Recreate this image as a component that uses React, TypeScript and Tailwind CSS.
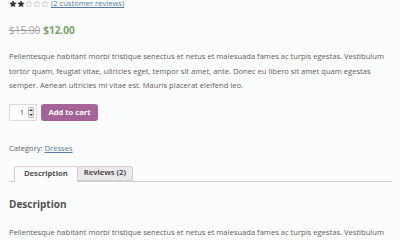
import React from 'react';

function Star({ filled }: { filled: boolean }) {
  return (
    <svg viewBox="0 0 24 24" className="w-[8px] h-[8px]">
      <path
        d="M12 2.5l2.9 6.1 6.6.8-4.9 4.6 1.3 6.6L12 17.3l-5.9 3.3 1.3-6.6-4.9-4.6 6.6-.8z"
        fill={filled ? '#333' : 'none'}
        stroke={filled ? '#333' : '#b5b5b5'}
        strokeWidth="1.6"
        strokeLinejoin="round"
      />
    </svg>
  );
}

export default function App() {
  const lorem =
    'Pellentesque habitant morbi tristique senectus et netus et malesuada fames ac turpis egestas. Vestibulum tortor quam, feugiat vitae, ultricies eget, tempor sit amet, ante. Donec eu libero sit amet quam egestas semper. Aenean ultricies mi vitae est. Mauris placerat eleifend leo.';

  return (
    <div className="w-[400px] h-[240px] overflow-hidden bg-[#fbfcfc] text-[#5e5e5e] font-['Open_Sans',sans-serif]">
      <div className="px-[9px]">
        {/* Rating */}
        <div className="-mt-[2px] h-[12px] flex items-center gap-[2px] text-[7.6px]">
          <div className="flex">
            {[0, 1, 2, 3, 4].map((i) => (
              <Star key={i} filled={i < 2} />
            ))}
          </div>
          <a href="#" className="text-[#557da1] underline">
            (2 customer reviews)
          </a>
        </div>

        {/* Price */}
        <div className="mt-[12px] h-[16px] flex items-center gap-[3px] text-[10px] leading-[16px]">
          <del className="text-[#a3a3a3]">$15.00</del>
          <span className="font-bold text-[#77a464]">$12.00</span>
        </div>

        {/* Short description */}
        <p className="mt-[11px] text-[7.6px] leading-[14.5px]">{lorem}</p>

        {/* Add to cart */}
        <form className="mt-[11.5px] flex gap-[4px] h-[17px]">
          <div className="w-[28px] h-[17px] border border-[#dcdcdc] bg-white flex items-center justify-end pr-[2px] gap-[4px]">
            <span className="text-[7.6px] text-[#444]">1</span>
            <div className="w-[6px] h-[11px] border border-[#bbb] bg-[#eee] flex flex-col items-center justify-around rounded-[1px]">
              <span className="w-0 h-0 border-l-[2px] border-r-[2px] border-b-[2px] border-l-transparent border-r-transparent border-b-[#444]" />
              <span className="w-0 h-0 border-l-[2px] border-r-[2px] border-t-[2px] border-l-transparent border-r-transparent border-t-[#444]" />
            </div>
          </div>
          <button
            type="button"
            className="w-[57px] h-[17px] rounded-[3px] bg-[#a46497] text-white font-bold text-[7.6px] flex items-center justify-center"
          >
            Add to cart
          </button>
        </form>

        {/* Meta */}
        <div className="mt-[20px] text-[7.6px] leading-[14.5px]">
          Category:{' '}
          <a href="#" className="text-[#557da1] underline">
            Dresses
          </a>
        </div>

        {/* Tabs */}
        <div className="mt-[10px] flex pl-[5px] border-b border-[#d3ced2] h-[16px]">
          <div className="h-[16px] -mb-px px-[9px] flex items-center bg-[#fbfcfc] border border-b-0 border-[#d3ced2] rounded-t-[3px] text-[7.6px] font-bold text-[#515151]">
            Description
          </div>
          <div className="h-[15px] px-[6px] flex items-center bg-[#ebe9eb] border border-l-0 border-[#d3ced2] rounded-tr-[3px] text-[7.6px] font-bold text-[#515151]">
            Reviews (2)
          </div>
        </div>

        {/* Panel */}
        <h2 className="mt-[15px] text-[10px] leading-[14px] font-bold text-[#515151]">Description</h2>
        <p className="mt-[14px] text-[7.6px] leading-[14.5px]">{lorem}</p>
      </div>
    </div>
  );
}
